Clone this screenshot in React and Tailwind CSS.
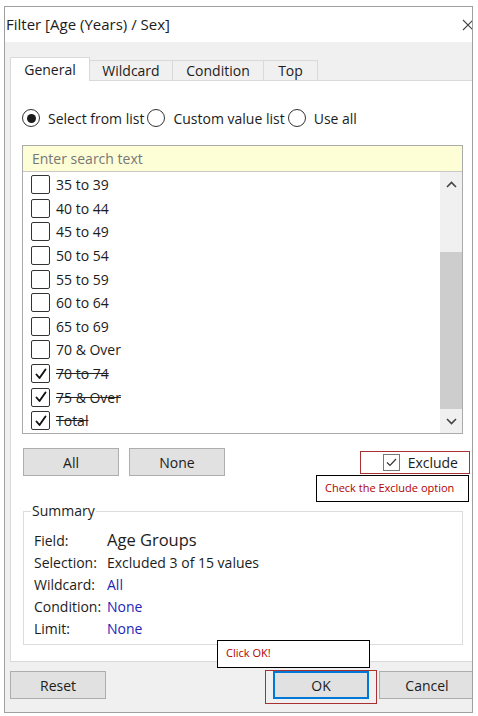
import React from "react";

const items = [
  ["35 to 39", false],
  ["40 to 44", false],
  ["45 to 49", false],
  ["50 to 54", false],
  ["55 to 59", false],
  ["60 to 64", false],
  ["65 to 69", false],
  ["70 & Over", false],
  ["70 to 74", true],
  ["75 & Over", true],
  ["Total", true],
];

function Check({ checked }) {
  return (
    <div className="w-[19px] h-[19px] border border-[#333] rounded-[2px] bg-white flex items-center justify-center shrink-0">
      {checked && (
        <svg width="14" height="14" viewBox="0 0 14 14">
          <path d="M2.5 7.5 L5.5 11 L11.5 2.5" fill="none" stroke="#111" strokeWidth="1.9" strokeLinecap="round" strokeLinejoin="round" />
        </svg>
      )}
    </div>
  );
}

function Radio({ on }) {
  return (
    <div className="w-[18px] h-[18px] rounded-full border border-[#333] bg-white flex items-center justify-center shrink-0">
      {on && <div className="w-[9px] h-[9px] rounded-full bg-[#1a1a1a]" />}
    </div>
  );
}

function Chevron({ up }) {
  return (
    <svg width="11" height="7" viewBox="0 0 11 7">
      <path d={up ? "M1 6 L5.5 1.5 L10 6" : "M1 1 L5.5 5.5 L10 1"} fill="none" stroke="#444" strokeWidth="1.6" />
    </svg>
  );
}

export default function App() {
  return (
    <div className="w-[478px] h-[716px] bg-white pt-[6px] pl-[4px] font-['Open_Sans',sans-serif] text-[14px] text-[#1c1c1c] relative overflow-hidden">
      <div className="w-[469px] h-[707px] border border-[#a0a0a0] flex flex-col bg-[#f0f0f0] overflow-hidden">
        {/* Title bar */}
        <div className="h-[35px] bg-white flex items-center justify-between shrink-0">
          <span className="pl-[1px] text-[15px] leading-none">Filter [Age (Years) / Sex]</span>
          <svg width="12" height="12" viewBox="0 0 12 12" className="mr-[-2px]">
            <path d="M1 1 L11 11 M11 1 L1 11" stroke="#444" strokeWidth="1.1" />
          </svg>
        </div>

        {/* Tab strip */}
        <div className="h-[38px] flex items-end pl-[5px] shrink-0 relative z-10">
          <div className="w-[80px] h-[24px] bg-white border border-b-0 border-[#d9d9d9] flex items-center justify-center mb-[-1px] pb-[1px]">
            General
          </div>
          <div className="w-[83px] h-[20px] border-t border-r border-[#d9d9d9] flex items-center justify-center">
            Wildcard
          </div>
          <div className="w-[91px] h-[20px] border-t border-r border-[#d9d9d9] flex items-center justify-center">
            Condition
          </div>
          <div className="w-[54px] h-[20px] border-t border-r border-[#d9d9d9] flex items-center justify-center">
            Top
          </div>
        </div>

        {/* Panel */}
        <div className="ml-[5px] h-[582px] bg-white border-l border-t border-b border-[#d9d9d9] shrink-0 flex flex-col">
          {/* radios */}
          <div className="mt-[25px] h-[24px] flex items-center pl-[11px]">
            <Radio on />
            <span className="ml-[8px] mr-[3px]">Select from list</span>
            <Radio />
            <span className="ml-[8px] mr-[3px]">Custom value list</span>
            <Radio />
            <span className="ml-[8px]">Use all</span>
          </div>

          {/* search + list */}
          <div className="mt-[15px] ml-[11px] w-[441px] border border-[#ababab] flex flex-col">
            <div className="h-[26px] bg-[#fdfdd6] border-b border-[#c8c8c8] flex items-center pl-[9px] text-[#777]">
              Enter search text
            </div>
            <div className="h-[261px] flex">
              <div className="flex-1 flex flex-col pt-[1px]">
                {items.map(([label, c]) => (
                  <div key={label} className="h-[23.6px] flex items-center pl-[8px] shrink-0">
                    <Check checked={c} />
                    <span className={"ml-[6px] " + (c ? "line-through decoration-[#222]" : "")}>{label}</span>
                  </div>
                ))}
              </div>
              <div className="w-[22px] bg-[#f0f0f0] flex flex-col">
                <div className="h-[24px] flex items-center justify-center">
                  <Chevron up />
                </div>
                <div className="flex-1 flex flex-col">
                  <div className="mt-[56px] flex-1 bg-[#cdcdcd]" />
                </div>
                <div className="h-[24px] flex items-center justify-center">
                  <Chevron />
                </div>
              </div>
            </div>
          </div>

          {/* buttons row */}
          <div className="mt-[14px] h-[28px] flex items-center">
            <div className="ml-[12px] w-[96px] h-[28px] bg-[#e1e1e1] border border-[#adadad] flex items-center justify-center shrink-0">
              All
            </div>
            <div className="ml-[10px] w-[96px] h-[28px] bg-[#e1e1e1] border border-[#adadad] flex items-center justify-center shrink-0">
              None
            </div>
            <div className="ml-auto mr-[14px] flex items-center">
              <div className="w-[17px] h-[17px] border border-[#777] bg-white flex items-center justify-center">
                <svg width="13" height="13" viewBox="0 0 13 13">
                  <path d="M2 6.5 L5 9.5 L11 3" fill="none" stroke="#333" strokeWidth="1.2" />
                </svg>
              </div>
              <span className="ml-[8px]">Exclude</span>
            </div>
          </div>

          {/* Summary */}
          <fieldset className="mt-[25px] ml-[12px] w-[440px] border border-[#dcdcdc] px-[10px] pb-[5px]">
            <legend className="ml-[-3px] px-[1px] text-[14px] leading-[20px]">Summary</legend>
            <div className="mt-[8px] grid grid-cols-[73px_1fr] auto-rows-[22px] items-center">
              <span>Field:</span>
              <span className="text-[16.5px]">Age Groups</span>
              <span>Selection:</span>
              <span>Excluded 3 of 15 values</span>
              <span>Wildcard:</span>
              <span className="text-[#2424b8]">All</span>
              <span>Condition:</span>
              <span className="text-[#2424b8]">None</span>
              <span>Limit:</span>
              <span className="text-[#2424b8]">None</span>
            </div>
          </fieldset>
        </div>

        {/* bottom buttons */}
        <div className="mt-[9px] flex items-center h-[28px]">
          <div className="ml-[5px] w-[96px] h-[28px] bg-[#e1e1e1] border border-[#adadad] flex items-center justify-center shrink-0">
            Reset
          </div>
          <div className="ml-[167px] w-[96px] h-[28px] bg-[#e1e1e1] border-2 border-[#0078d7] flex items-center justify-center shrink-0">
            OK
          </div>
          <div className="ml-[10px] w-[96px] h-[28px] bg-[#e1e1e1] border border-[#adadad] flex items-center justify-center shrink-0">
            Cancel
          </div>
        </div>
      </div>

      {/* Annotations */}
      <div className="absolute left-[360px] top-[451px] w-[110px] h-[23px] border border-[#a83232]" />
      <div className="absolute left-[316px] top-[475px] w-[153px] h-[27px] border border-black bg-white flex items-center pl-[8px] text-[11px] text-[#b00000]">
        Check the Exclude option
      </div>
      <div className="absolute left-[217px] top-[640px] w-[153px] h-[28px] border border-black bg-white pl-[8px] pt-[4px] text-[11px] text-[#b00000]">
        Click OK!
      </div>
      <div className="absolute left-[265px] top-[670px] w-[112px] h-[34px] border border-[#a83232]" />
    </div>
  );
}
